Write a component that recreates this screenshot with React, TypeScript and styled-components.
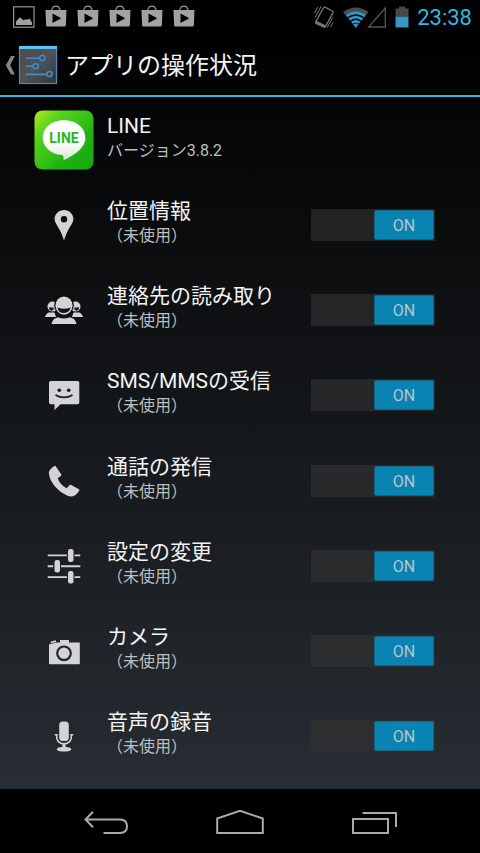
import React, { useState } from "react";
import styled, { createGlobalStyle } from "styled-components";

const GlobalStyle = createGlobalStyle`
  * { box-sizing: border-box; }
  body {
    margin: 0;
    background: #000;
    font-family: Roboto, "Noto Sans CJK JP", sans-serif;
  }
`;

const Screen = styled.div`
  min-height: 100vh;
  display: flex;
  flex-direction: column;
  color: #f3f3f3;
  background: #000;
`;

const StatusBar = styled.div`
  height: 33px;
  flex: none;
  display: flex;
  justify-content: space-between;
  align-items: center;
  padding: 0 8px 0 13px;
`;

const StatusGroup = styled.div<{ $gap: number }>`
  display: flex;
  align-items: center;
  gap: ${(p) => p.$gap}px;
`;

const Clock = styled.time`
  padding-top: 2px;
  font-size: 22px;
  line-height: 30px;
  color: #33b5e5;
`;

const Window = styled.div`
  flex: 1;
  display: flex;
  flex-direction: column;
  background: linear-gradient(#000, #272d33);
`;

const ActionBar = styled.header`
  height: 64px;
  flex: none;
  display: flex;
  align-items: center;
  gap: 7px;
  padding: 2px 5px 0;
  border-bottom: 2px solid #33b5e5;
`;

const UpButton = styled.button`
  display: flex;
  align-items: center;
  padding: 0;
  border: 0;
  background: none;
  cursor: pointer;
`;

const Title = styled.h1`
  margin: 0;
  padding-top: 2px;
  font-size: 24px;
  line-height: 32px;
  font-weight: 400;
`;

const List = styled.main`
  flex: 1;
  display: grid;
  grid-auto-rows: 1fr;
  padding-bottom: 10px;
`;

const Row = styled.section`
  display: grid;
  grid-template-columns: 60px 1fr auto;
  align-items: center;
  column-gap: 13px;
  min-height: 72px;
  padding: 0 45px 0 34px;
`;

const IconCell = styled.div`
  display: flex;
  justify-content: center;
`;

const Texts = styled.div`
  padding-bottom: 4px;
`;

const Name = styled.h2`
  margin: 0;
  font-size: 21px;
  line-height: 26px;
  font-weight: 400;
`;

const Detail = styled.p`
  margin: 0;
  font-size: 16px;
  line-height: 24px;
  color: #bebebe;
`;

const SwitchTrack = styled.label<{ $on: boolean }>`
  display: flex;
  justify-content: ${(p) => (p.$on ? "flex-end" : "flex-start")};
  width: 124px;
  height: 32px;
  padding: 1px;
  background: rgba(51, 51, 51, 0.6);
  cursor: pointer;
`;

const SwitchInput = styled.input`
  appearance: none;
  width: 0;
  height: 0;
  margin: 0;
  outline: none;
`;

const Thumb = styled.span<{ $on: boolean }>`
  width: 60px;
  border: 1px solid ${(p) => (p.$on ? "#16647f" : "#444")};
  border-radius: 2px;
  background: ${(p) => (p.$on ? "#0983b1" : "#555")};
  color: #bcc5c9;
  font-size: 16px;
  line-height: 30px;
  text-align: center;

  ${SwitchInput}:focus-visible + & {
    border-color: #fff;
  }
`;

const NavBar = styled.nav`
  height: 64px;
  flex: none;
  display: grid;
  grid-template-columns: repeat(3, 1fr);
  padding: 4px 38px 0;
`;

const NavButton = styled.button`
  display: flex;
  align-items: center;
  justify-content: center;
  padding: 0;
  border: 0;
  background: none;
  cursor: pointer;
`;

const Glyph = styled.svg`
  display: block;
  flex: none;
`;

const ICON = "#d2d4d5";

const PictureIcon = () => (
  <Glyph width="22" height="24" viewBox="0 0 22 24" aria-hidden="true">
    <rect x="0.6" y="1.8" width="20.4" height="20.4" fill="none" stroke="#969696" strokeWidth="1.2" />
    <path d="M3 20V16.500l4-4.300 3.500 3 2-1 1.500.600L16.500 13.500l2.500 4v2.500z" fill="#a0a0a0" />
  </Glyph>
);

const BagIcon = () => (
  <Glyph width="22" height="24" viewBox="0 0 22 24" aria-hidden="true">
    <path d="M6.500 6C7 2.800 8.500 1.200 10.900 1.200S14.800 2.800 15.300 6" fill="none" stroke="#969696" strokeWidth="1.200" />
    <path d="M.500 5h21l-.600 15q0 1.500-1.500 1.500H2.600q-1.500 0-1.500-1.500z" fill="#a3a3a3" />
    <path d="M7.500 8.500v9.500L16.300 13.200z" fill="#000" />
  </Glyph>
);

const VibrateIcon = () => (
  <Glyph width="22" height="24" viewBox="0 0 22 24" aria-hidden="true" fill="none" stroke="#777" strokeWidth="1.300">
    <path d="M12 2.200L19.300 6Q20.500 6.700 20 7.900L12.500 21.500Q12 22.500 10.800 22L3.300 18.300Q2.200 17.700 2.800 16.600L10.400 3Q11 1.800 12 2.200z" />
    <path d="M2.600 17l9.800 4.800" strokeWidth="2.800" />
    <path d="M8.200 1.200L2 12.500M4.800 2L1.500 8M14.200 22.500L19.800 12.500M17.500 22L20 17.500" strokeWidth="1" />
  </Glyph>
);

const NetworkIcon = () => (
  <Glyph width="44" height="24" viewBox="0 0 44 24" aria-hidden="true">
    <path d="M0 7Q12.800-2 25.600 7L23.200 10Q12.800 3 2.400 10z" fill="#4c4c4c" />
    <g fill="none" stroke="#3097c2">
      <path d="M3.400 11Q12.800 4.500 22.200 11" strokeWidth="3" />
      <path d="M6.200 14.500Q12.800 9.800 19.400 14.500" strokeWidth="2.800" />
      <path d="M8.800 17.800Q12.800 15 16.800 17.800" strokeWidth="2.600" />
    </g>
    <path d="M10 19.200Q12.800 17.600 15.600 19.200L12.800 23z" fill="#3097c2" />
    <path d="M42.300 3V22H25.500z" fill="none" stroke="#555" strokeWidth="1.300" />
  </Glyph>
);

const BatteryIcon = () => (
  <Glyph width="14" height="24" viewBox="0 0 14 24" aria-hidden="true">
    <path d="M4 1.500h6v2h3.500v8H.500V3.500H4z" fill="#484848" />
    <path d="M.500 11.500h13v11H.500z" fill="#3796bd" />
  </Glyph>
);

const UpIcon = () => (
  <Glyph width="13" height="40" viewBox="0 0 13 40" aria-hidden="true">
    <path d="M6 11h3.800L5.200 20.300 9.800 29.500H6L.800 20.300z" fill="#858585" />
  </Glyph>
);

const SettingsIcon = () => (
  <Glyph width="40" height="40" viewBox="0 0 40 40" aria-hidden="true">
    <defs>
      <linearGradient id="panel" x1="0" y1="0" x2="1" y2="1">
        <stop offset="0" stopColor="#4b4b4b" />
        <stop offset="0.500" stopColor="#525252" />
        <stop offset="1" stopColor="#343434" />
      </linearGradient>
    </defs>
    <rect x="1.500" y="1.500" width="37" height="37" fill="url(#panel)" stroke="#3c8fcb" strokeWidth="1.200" />
    <path d="M1 1h38v3H1z" fill="#56c5f2" />
    <g stroke="#3b8fd0" strokeWidth="1.600" fill="#444">
      <path d="M7.500 13.200h14.300M7.500 21.300h7.500M7.500 29.400h21.500" />
      <path d="M27 13.200h7M20 21.300h14" stroke="#29557a" />
      <circle cx="24.300" cy="13" r="2.500" />
      <circle cx="17.700" cy="21.300" r="2.500" />
      <circle cx="31.500" cy="29" r="2.500" />
    </g>
  </Glyph>
);

const LineLogo = () => (
  <Glyph width="60" height="60" viewBox="0 0 60 60" role="img" aria-label="LINE">
    <defs>
      <linearGradient id="leaf" x1="0" y1="0" x2="1" y2="1">
        <stop offset="0" stopColor="#b4ea22" />
        <stop offset="0.250" stopColor="#58d21b" />
        <stop offset="0.600" stopColor="#2abb14" />
        <stop offset="1" stopColor="#16ac12" />
      </linearGradient>
      <linearGradient id="bubble" x1="0" y1="0" x2="0" y2="1">
        <stop offset="0" stopColor="#fff" />
        <stop offset="0.600" stopColor="#fafcfa" />
        <stop offset="1" stopColor="#d5e6d2" />
      </linearGradient>
    </defs>
    <rect x="0.500" y="0.500" width="59" height="59" rx="8" fill="url(#leaf)" />
    <path d="M59.500 13L14 59.500H51q8.500 0 8.500-8.500z" fill="#0a9d10" opacity="0.180" />
    <path d="M30 10C41 10 51.500 16.500 51.500 28C51.500 37 43 44 29.500 50.500C29 48 30 47 28.500 45.300C17 44.800 8.500 37 8.500 28C8.500 17 18 10 30 10z" fill="url(#bubble)" stroke="#1f9816" strokeOpacity="0.300" />
    <text x="30" y="33" textAnchor="middle" fontFamily="Roboto, sans-serif" fontWeight="700" fontSize="14" fill="#2fb41e">LINE</text>
  </Glyph>
);

const RowIcon = ({ children }: { children: React.ReactNode }) => (
  <Glyph width="40" height="40" viewBox="0 0 40 40" aria-hidden="true" fill={ICON}>
    {children}
  </Glyph>
);

const PinIcon = () => (
  <RowIcon>
    <path fillRule="evenodd" d="M20 5C25.200 5 29.400 9 29.400 14C29.400 17.500 26 21.500 24 25.500C22.500 28.500 21 32 20 35.500C19 32 17.500 28.500 16 25.500C14 21.500 10.600 17.500 10.600 14C10.600 9 14.800 5 20 5zM20 11a3.200 3.200 0 1 0 0 6.400a3.200 3.200 0 1 0 0-6.400z" />
  </RowIcon>
);

const PeopleIcon = () => (
  <RowIcon>
    <circle cx="8.500" cy="16.600" r="5" />
    <circle cx="31.500" cy="16.600" r="5" />
    <path d="M1 27Q1.500 24 4.500 22.500H10.500L12 27zM39 27Q38.500 24 35.500 22.500H29.500L28 27z" />
    <path d="M4.800 17.500h5q0 3-2 3.300-2.500 0-3-3.300zM35.200 17.500h-5q0 3 2 3.300 2.500 0 3-3.300z" fill="#14171a" />
    <ellipse cx="20" cy="15.600" rx="9.800" ry="10.400" fill="#0d0f10" />
    <ellipse cx="20" cy="15.600" rx="8.600" ry="9.100" />
    <path d="M13.300 17.500Q17 18.800 20 18.800T26.700 17.500Q25.500 22.800 20 23T13.300 17.500z" fill="#111416" />
    <path d="M7.500 34Q8.500 28.500 14 27.200Q20 29.700 26 27.200Q31.500 28.500 32.500 34z" />
  </RowIcon>
);

const MessageIcon = () => (
  <RowIcon>
    <path d="M6.800 6H33.500q1.800 0 1.800 1.800V27.400q0 1.800-1.800 1.800H16.500L10.500 35V29.200H6.800Q5 29.200 5 27.400V7.800Q5 6 6.800 6z" />
    <circle cx="15.300" cy="15.300" r="1.800" fill="#14181b" />
    <circle cx="24.700" cy="15.300" r="1.800" fill="#14181b" />
    <path d="M11.500 20Q20 24.800 28.500 20" fill="none" stroke="#14181b" strokeWidth="1.600" />
  </RowIcon>
);

const PhoneIcon = () => (
  <RowIcon>
    <path d="M11.700 5.300L17.200 13.300Q17.700 14.100 17 14.700L13.700 17.300C15 21.500 18 24.700 22.700 27.200L25.600 24.100Q26.400 23.400 27.300 23.900L34.800 28.300Q35.900 29 35.100 30C32.500 33.500 30.500 35.500 27.300 35.400C22.500 35.200 17 31.500 13 27.500C8.500 23 5.200 17 4.900 12C4.700 9.500 7.500 7 10.500 5Q11.200 4.600 11.700 5.300z" />
  </RowIcon>
);

const SlidersIcon = () => (
  <RowIcon>
    <path d="M3.700 8.400h19.200v1.900H3.700zM30.500 8.400h5.800v1.900h-5.800zM3.700 19.300h5.500v1.900H3.700zM17 19.300h19.300v1.900H17zM3.700 30.200h19.200v1.900H3.700zM30.500 30.200h5.800v1.900h-5.800z" />
    <rect x="24" y="3" width="5.500" height="13" rx="2.200" />
    <rect x="10.500" y="14" width="5.500" height="12.500" rx="2.200" />
    <rect x="24" y="25" width="5.500" height="12.500" rx="2.200" />
  </RowIcon>
);

const CameraIcon = () => (
  <RowIcon>
    <path d="M7 10.500L12 9.200V11L6.500 12.500zM5 13.500L12.500 11.600H16V9H25V11.600H35.800V32.500Q35.800 33.200 35 33.200H5.700Q5 33.200 5 32.500z" />
    <circle cx="20" cy="22.300" r="6.800" fill="none" stroke="#20262a" strokeWidth="2.200" />
  </RowIcon>
);

const MicIcon = () => (
  <RowIcon>
    <rect x="15.200" y="5.500" width="9.600" height="19.500" rx="3.500" />
    <path d="M10.800 18.800H13.800M29.200 18.800H26.200M12.500 19C12.500 24.500 15 27.900 20 27.900S27.500 24.500 27.500 19" fill="none" stroke={ICON} strokeWidth="1.600" />
    <path d="M18.500 27.500h3v3.500h-3z" />
    <ellipse cx="20" cy="33.200" rx="7.300" ry="2.400" />
  </RowIcon>
);

const BackIcon = () => (
  <Glyph width="46" height="28" viewBox="0 0 46 28" aria-hidden="true" fill="none" stroke="#aaa" strokeWidth="2">
    <path d="M11 2.700L3.500 10.500L11 18.300M4 10.500H38Q45 10.800 45 17.300T38 24H21.500" />
  </Glyph>
);

const HomeIcon = () => (
  <Glyph width="50" height="28" viewBox="0 0 50 28" aria-hidden="true" fill="none" stroke="#aaa" strokeWidth="2">
    <path d="M2.200 24V9.500L25 1.800L47.800 9.500V24z" />
  </Glyph>
);

const RecentIcon = () => (
  <Glyph width="48" height="28" viewBox="0 0 48 28" aria-hidden="true" fill="none" stroke="#aaa" strokeWidth="2">
    <path d="M2 10h35v14H2zM11.500 4H45V18" />
  </Glyph>
);

const permissions = [
  { id: "location", name: "位置情報", Icon: PinIcon },
  { id: "contacts", name: "連絡先の読み取り", Icon: PeopleIcon },
  { id: "sms", name: "SMS/MMSの受信", Icon: MessageIcon },
  { id: "call", name: "通話の発信", Icon: PhoneIcon },
  { id: "settings", name: "設定の変更", Icon: SlidersIcon },
  { id: "camera", name: "カメラ", Icon: CameraIcon },
  { id: "audio", name: "音声の録音", Icon: MicIcon },
];

function Switch({ labelId }: { labelId: string }) {
  const [on, setOn] = useState(true);
  return (
    <SwitchTrack $on={on}>
      <SwitchInput
        type="checkbox"
        role="switch"
        aria-labelledby={labelId}
        checked={on}
        onChange={(e) => setOn(e.target.checked)}
      />
      <Thumb $on={on}>{on ? "ON" : "OFF"}</Thumb>
    </SwitchTrack>
  );
}

export default function App() {
  return (
    <>
      <GlobalStyle />
      <Screen lang="ja">
        <StatusBar>
          <StatusGroup $gap={10}>
            <PictureIcon />
            <BagIcon />
            <BagIcon />
            <BagIcon />
            <BagIcon />
            <BagIcon />
          </StatusGroup>
          <StatusGroup $gap={8}>
            <VibrateIcon />
            <NetworkIcon />
            <BatteryIcon />
            <Clock>23:38</Clock>
          </StatusGroup>
        </StatusBar>
        <Window>
          <ActionBar>
            <UpButton type="button" aria-label="戻る">
              <UpIcon />
              <SettingsIcon />
            </UpButton>
            <Title>アプリの操作状況</Title>
          </ActionBar>
          <List>
            <Row>
              <IconCell>
                <LineLogo />
              </IconCell>
              <Texts>
                <Name>LINE</Name>
                <Detail>バージョン3.8.2</Detail>
              </Texts>
            </Row>
            {permissions.map(({ id, name, Icon }) => (
              <Row key={id}>
                <IconCell>
                  <Icon />
                </IconCell>
                <Texts>
                  <Name id={id}>{name}</Name>
                  <Detail>（未使用）</Detail>
                </Texts>
                <Switch labelId={id} />
              </Row>
            ))}
          </List>
        </Window>
        <NavBar>
          <NavButton type="button" aria-label="バック">
            <BackIcon />
          </NavButton>
          <NavButton type="button" aria-label="ホーム">
            <HomeIcon />
          </NavButton>
          <NavButton type="button" aria-label="最近使ったアプリ">
            <RecentIcon />
          </NavButton>
        </NavBar>
      </Screen>
    </>
  );
}
